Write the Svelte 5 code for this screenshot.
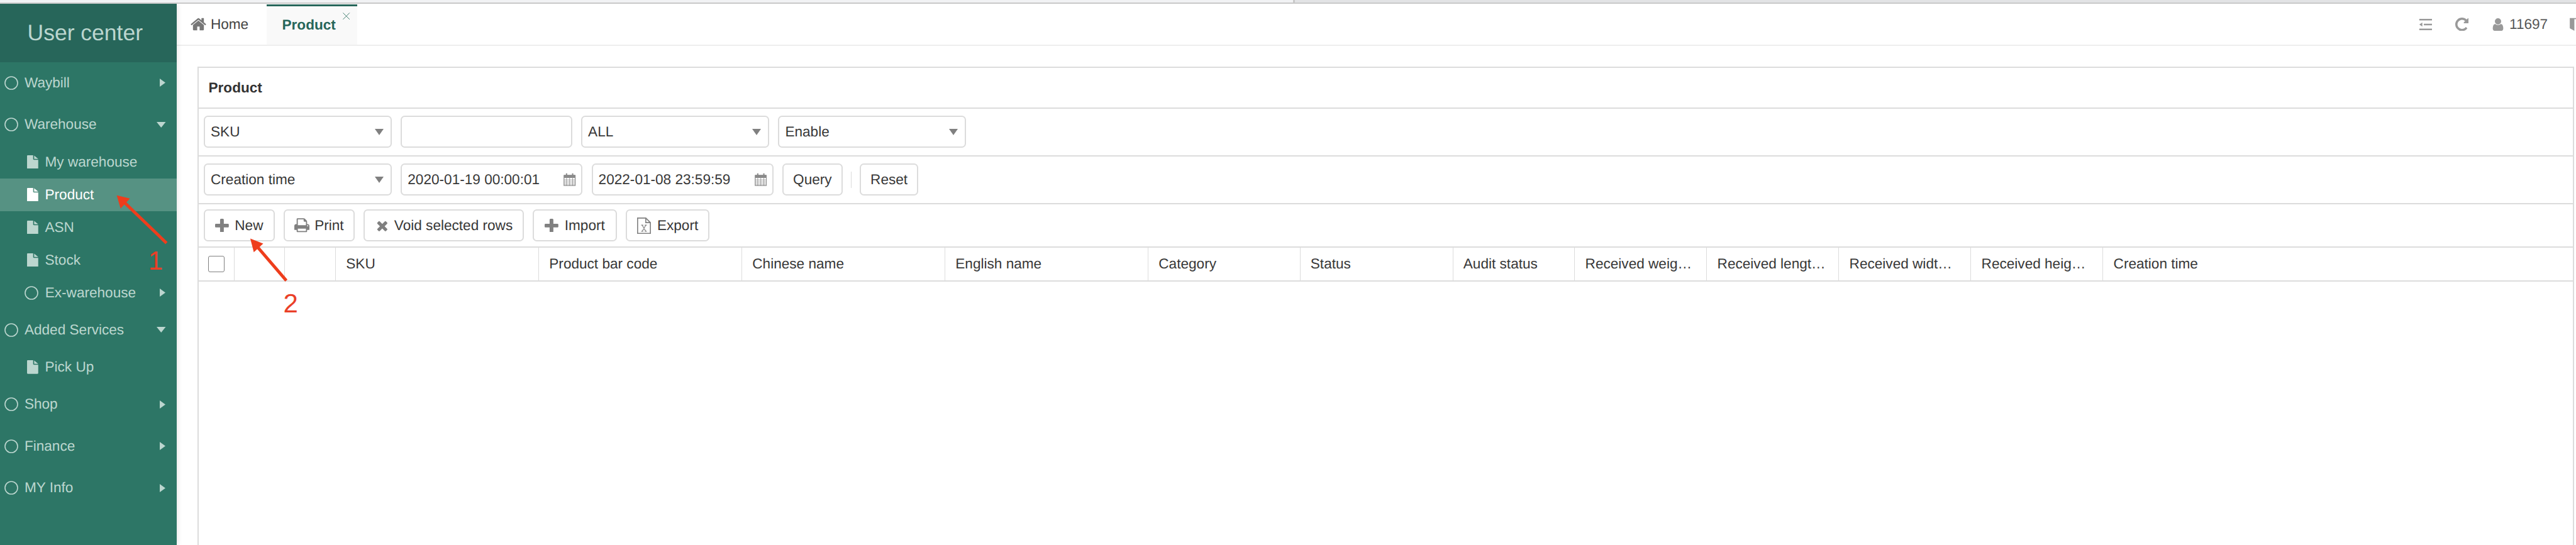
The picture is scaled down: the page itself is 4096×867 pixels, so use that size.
<script>
	const nav = [
		{ label: 'Waybill', arrow: 'right' },
		{ label: 'Warehouse', arrow: 'down' },
		{ label: 'My warehouse', sub: true },
		{ label: 'Product', sub: true, active: true },
		{ label: 'ASN', sub: true },
		{ label: 'Stock', sub: true },
		{ label: 'Ex-warehouse', sub: true, folder: true, arrow: 'right' },
		{ label: 'Added Services', arrow: 'down' },
		{ label: 'Pick Up', sub: true },
		{ label: 'Shop', arrow: 'right' },
		{ label: 'Finance', arrow: 'right' },
		{ label: 'MY Info', arrow: 'right' }
	];

	const columns = [
		'', '', '', 'SKU', 'Product bar code', 'Chinese name', 'English name', 'Category', 'Status', 'Audit status',
		'Received weig…', 'Received lengt…', 'Received widt…', 'Received heig…', 'Creation time'
	];
</script>

<div class="strip"><div class="strip-left"></div><div class="strip-right"></div></div>

<div class="app">
	<aside class="side">
		<div class="logo">User center</div>
		<nav>
			{#each nav as item}
				<div class="item" class:sub={item.sub} class:folder={item.folder} class:active={item.active}>
					{#if item.sub && !item.folder}
						<svg class="file" viewBox="0 0 22 27">
							<path d="M1.500 0H12v7.500C12 8.300 12.700 9 13.500 9H22v16.500c0 .8-.7 1.500-1.500 1.500H1.500C.7 27 0 26.300 0 25.500V1.500C0 .7.7 0 1.500 0zM14 .5l8 6.500h-8z" fill="currentColor" />
						</svg>
					{:else}
						<svg class="circle" viewBox="0 0 27 27">
							<circle cx="13.500" cy="13.500" r="12.300" fill="none" stroke="currentColor" stroke-width="2" />
						</svg>
					{/if}
					<span>{item.label}</span>
					{#if item.arrow === 'right'}
						<svg class="arrow-right" viewBox="0 0 11 16"><path d="M0 0l11 8-11 8z" fill="currentColor" /></svg>
					{:else if item.arrow === 'down'}
						<svg class="arrow-down" viewBox="0 0 18 11"><path d="M0 0h18l-9 11z" fill="currentColor" /></svg>
					{/if}
				</div>
			{/each}
		</nav>
	</aside>

	<main class="main">
		<header class="tabs">
			<div class="tab home">
				<svg class="home-icon" viewBox="0 0 1792 1792">
					<path d="M1472 992v480q0 26-19 45t-45 19h-384v-384h-256v384h-384q-26 0-45-19t-19-45v-480q0-1 .5-3t.5-3l575-474 575 474q1 2 1 6zm223-69l-62 74q-8 9-21 11h-3q-13 0-21-7l-692-577-692 577q-12 8-24 7-13-2-21-11l-62-74q-8-10-7-23.500t11-21.500l719-599q32-26 76-26t76 26l244 204v-195q0-14 9-23t23-9h192q14 0 23 9t9 23v408l219 182q10 8 11 21.500t-7 23.500z" fill="currentColor" />
				</svg>
				Home
			</div>
			<div class="tab current">
				Product
				<svg class="close" viewBox="0 0 14 14"><path d="M.5.5l13 13M13.500.5l-13 13" stroke="currentColor" fill="none" stroke-width="1.200" /></svg>
			</div>
			<div class="tools">
				<svg class="t-outdent" viewBox="0 0 26 22">
					<path d="M1 0h25v3H1zM10 9.500h16v3H10zM1 19h25v3H1zM1 11l6-4v8z" fill="currentColor" />
				</svg>
				<svg class="t-refresh" viewBox="128 128 1536 1536">
					<path d="M1664 256v448q0 26-19 45t-45 19h-448q-42 0-59-40-17-39 14-69l138-138q-148-137-349-137-104 0-198.500 40.500t-163.500 109.500-109.500 163.500-40.500 198.500 40.500 198.500 109.500 163.500 163.500 109.500 198.500 40.500q119 0 225-52t179-147q7-10 23-12 15 0 25 9l137 138q9 8 9.500 20.500t-7.500 22.500q-109 132-264 204.500t-327 72.500q-156 0-298-61t-245-164-164-245-61-298 61-298 164-245 245-164 298-61q147 0 284.500 55.500t244.500 156.500l130-129q29-31 70-14 39 17 39 59z" fill="currentColor" />
				</svg>
				<svg class="t-user" viewBox="256 128 1280 1536">
					<path d="M1536 1399q0 109-62.500 187t-150.500 78h-854q-88 0-150.500-78t-62.500-187q0-85 8.500-160.500t31.500-152 58.500-131 94-89 134.500-34.500q131 128 313 128t313-128q76 0 134.500 34.500t94 89 58.500 131 31.500 152 8.500 160.500zm-256-887q0 159-112.500 271.500t-271.500 112.500-271.500-112.500-112.500-271.500 112.500-271.500 271.500-112.500 271.500 112.500 112.500 271.500z" fill="currentColor" />
				</svg>
				<span class="uid">11697</span>
				<svg class="t-door" viewBox="0 0 17 26">
					<path d="M0 1h17v2H9v23l-9-5z" fill="currentColor" />
				</svg>
			</div>
		</header>

		<section class="panel">
			<div class="row title">Product</div>

			<div class="row filters">
				<div class="ctl select">SKU<i class="caret"></i></div>
				<div class="ctl input"></div>
				<div class="ctl select">ALL<i class="caret"></i></div>
				<div class="ctl select">Enable<i class="caret"></i></div>
			</div>

			<div class="row filters second">
				<div class="ctl select">Creation time<i class="caret"></i></div>
				<div class="ctl date">
					2020-01-19 00:00:01
					{@render calendar()}
				</div>
				<div class="ctl date">
					2022-01-08 23:59:59
					{@render calendar()}
				</div>
				<div class="ctl btn">Query</div>
				<div class="divider"></div>
				<div class="ctl btn">Reset</div>
			</div>

			<div class="row toolbar">
				<div class="ctl tbtn">
					<svg class="i-plus" viewBox="192 128 1408 1408">
						<path d="M1600 736v192q0 40-28 68t-68 28h-416v416q0 40-28 68t-68 28h-192q-40 0-68-28t-28-68v-416h-416q-40 0-68-28t-28-68v-192q0-40 28-68t68-28h416v-416q0-40 28-68t68-28h192q40 0 68 28t28 68v416h416q40 0 68 28t28 68z" fill="currentColor" />
					</svg>
					New
				</div>
				<div class="ctl tbtn print">
					<svg class="i-print" viewBox="64 128 1664 1536">
						<path d="M448 1536h896v-256h-896v256zm0-640h896v-384h-160q-40 0-68-28t-28-68v-160h-640v640zm1152 64q0-26-19-45t-45-19-45 19-19 45 19 45 45 19 45-19 19-45zm128 0v416q0 13-9.500 22.500t-22.500 9.500h-224v160q0 40-28 68t-68 28h-960q-40 0-68-28t-28-68v-160h-224q-13 0-22.500-9.500t-9.500-22.500v-416q0-79 56.500-135.500t135.500-56.500h64v-544q0-40 28-68t68-28h672q40 0 88 20t76 48l152 152q28 28 48 76t20 88v256h64q79 0 135.500 56.500t56.500 135.500z" fill="currentColor" />
					</svg>
					Print
				</div>
				<div class="ctl tbtn void">
					<svg class="i-times" viewBox="250 230 1240 1324">
						<path d="M1490 1322q0 40-28 68l-136 136q-28 28-68 28t-68-28l-294-294-294 294q-28 28-68 28t-68-28l-136-136q-28-28-28-68t28-68l294-294-294-294q-28-28-28-68t28-68l136-136q28-28 68-28t68 28l294 294 294-294q28-28 68-28t68 28l136 136q28 28 28 68t-28 68l-294 294 294 294q28 28 28 68z" fill="currentColor" />
					</svg>
					Void selected rows
				</div>
				<div class="ctl tbtn import">
					<svg class="i-plus" viewBox="192 128 1408 1408">
						<path d="M1600 736v192q0 40-28 68t-68 28h-416v416q0 40-28 68t-68 28h-192q-40 0-68-28t-28-68v-416h-416q-40 0-68-28t-28-68v-192q0-40 28-68t68-28h416v-416q0-40 28-68t68-28h192q40 0 68 28t28 68v416h416q40 0 68 28t28 68z" fill="currentColor" />
					</svg>
					Import
				</div>
				<div class="ctl tbtn">
					<svg class="i-excel" viewBox="0 0 27 32">
						<path d="M1 1h16l9 9v21H1z" fill="none" stroke="currentColor" stroke-width="2" />
						<path d="M17 1v9h9" fill="none" stroke="currentColor" stroke-width="2" />
						<path d="M8 15h4M15 15h4M8 27h4M15 27h4M10 15l7 12M17 15l-7 12" fill="none" stroke="currentColor" stroke-width="1.500" />
					</svg>
					Export
				</div>
			</div>

			<div class="row thead">
				{#each columns as col, i}
					<div class="th">
						{#if i === 0}<span class="check"></span>{:else}{col}{/if}
					</div>
				{/each}
			</div>
		</section>
	</main>

	<svg class="marks" viewBox="0 0 5072 1074">
		<line x1="327" y1="479" x2="243" y2="398" stroke="#ee3d1c" stroke-width="6" />
		<path d="M229 385l26 6-18.500 20z" fill="#ee3d1c" />
		<line x1="563" y1="553" x2="503" y2="483" stroke="#ee3d1c" stroke-width="6" />
		<path d="M492 470l25.500 10-18.500 17z" fill="#ee3d1c" />
		<text x="291" y="532" class="mark-num">1</text>
		<text x="557" y="616" class="mark-num">2</text>
	</svg>
</div>

{#snippet calendar()}
	<svg class="cal" viewBox="0 0 24 26">
		<path d="M1 5h22v20H1z" fill="none" stroke="currentColor" stroke-width="1.500" />
		<path d="M1 4h22v6H1z" fill="currentColor" />
		<path d="M1 14h22M1 18h22M1 22h22M6 10v15M12 10v15M18 10v15" stroke="currentColor" stroke-width="1" />
		<path d="M6 1v6M18 1v6" stroke="currentColor" stroke-width="2.500" />
	</svg>
{/snippet}

<style>
	:global(body) {
		font-family: 'Liberation Sans', Arial, sans-serif;
		font-size: 22.6px;
		color: #383838;
		background: #fff;
		text-rendering: geometricPrecision;
	}

	.strip {
		display: flex;
		height: 5.6px;
		box-sizing: border-box;
		border-bottom: 2px solid #c9c9c9;
	}
	.strip-left {
		width: 2056px;
		background: #f1f2f4;
		border-right: 3px solid #c9c9c9;
	}
	.strip-right {
		flex: 1;
		background: #e2e3e5;
	}

	.app {
		display: flex;
		position: relative;
		height: 861.4px;
		overflow: hidden;
	}

	.side {
		flex: 0 0 281px;
		background: #2d7666;
		color: #bcd6cf;
		box-shadow: 0 0 9px rgba(0, 0, 0, 0.14);
		position: relative;
		z-index: 1;
	}
	.logo {
		height: 93px;
		line-height: 93px;
		background: #27665a;
		padding-left: 43.5px;
		font-size: 35.5px;
		color: #bcd6cf;
	}

	.item {
		display: flex;
		align-items: center;
		height: 66.5px;
		padding-left: 6.5px;
		gap: 10.4px;
	}
	.item.sub {
		height: 52px;
		padding-left: 42.8px;
		gap: 10.9px;
	}
	.item.folder {
		padding-left: 38.8px;
	}
	.item.active {
		background: #569283;
		color: #fff;
	}
	.circle {
		width: 22px;
		height: 22px;
	}
	.file {
		width: 17.800px;
		height: 21.800px;
	}
	.arrow-right {
		width: 9px;
		height: 13px;
		margin-left: auto;
		margin-right: 18.200px;
	}
	.arrow-down {
		width: 14.500px;
		height: 9px;
		margin-left: auto;
		margin-right: 17.400px;
	}

	.main {
		flex: 1;
		display: flex;
		flex-direction: column;
		min-width: 0;
	}

	.tabs {
		display: flex;
		align-items: stretch;
		height: 67px;
		box-sizing: border-box;
		border-bottom: 2px solid #eeeeee;
	}
	.tab {
		display: flex;
		align-items: center;
		box-sizing: border-box;
	}
	.tab.home {
		width: 143px;
		padding-left: 23.400px;
		padding-top: 1.500px;
		gap: 8px;
		color: #444;
	}
	.home-icon {
		width: 27px;
		height: 27px;
		color: #777;
		margin: 0 -2px 0 -2.500px;
	}
	.tab.current {
		position: relative;
		width: 143.800px;
		margin-top: 1px;
		padding-left: 24.500px;
		background: #f9f9f9;
		border-top: 3.200px solid #27665a;
		color: #27665a;
		font-weight: bold;
	}
	.close {
		position: absolute;
		top: 10px;
		right: 11.300px;
		width: 11.300px;
		height: 11.300px;
		color: #3f7d6e;
	}

	.tools {
		margin-left: auto;
		display: flex;
		align-items: center;
		padding-top: 1px;
		color: #999;
	}
	.t-outdent {
		width: 21px;
		height: 18px;
		margin-right: 37px;
	}
	.t-refresh {
		width: 21.500px;
		height: 21.500px;
		margin-right: 38px;
	}
	.t-user {
		width: 18px;
		height: 20px;
		margin-right: 9px;
	}
	.uid {
		color: #555;
		margin-right: 33.500px;
	}
	.t-door {
		width: 16px;
		height: 21px;
		margin-right: -4.700px;
	}

	.panel {
		flex: 1;
		margin: 33px 2.800px 0 33px;
		border: 2px solid #dcdcdc;
		border-bottom: 0;
		min-height: 0;
	}
	.row {
		box-sizing: border-box;
		border-bottom: 2px solid #dcdcdc;
	}
	.title {
		height: 65.200px;
		line-height: 63.500px;
		padding-left: 15.500px;
		font-weight: bold;
		color: #333;
	}
	.filters {
		display: flex;
		align-items: center;
		gap: 14.300px;
		height: 75.900px;
		padding-left: 8px;
	}
	.filters.second {
		height: 76.100px;
	}
	.toolbar {
		display: flex;
		align-items: center;
		gap: 14.200px;
		height: 69.500px;
		padding-left: 8px;
	}

	.ctl {
		display: flex;
		align-items: center;
		box-sizing: border-box;
		height: 51px;
		border: 2px solid #dcdcdc;
		border-radius: 6.500px;
		padding: 0 9px;
		background: #fff;
	}
	.select {
		width: 299px;
		position: relative;
	}
	.caret {
		position: absolute;
		right: 11.500px;
		top: 50%;
		margin-top: -5px;
		border-style: solid;
		border-width: 10px 7.250px 0;
		border-color: #808080 transparent transparent;
	}
	.input {
		width: 272.500px;
	}
	.date {
		width: 289px;
		justify-content: space-between;
		padding-right: 8.500px;
	}
	.cal {
		width: 19.400px;
		height: 21px;
		color: #8a8a8a;
	}
	.btn {
		padding: 0 15.200px;
	}
	.divider {
		width: 1px;
		height: 26px;
		margin: 0 -1.250px;
		background: #dcdcdc;
	}

	.tbtn {
		height: 51.700px;
		padding: 0 16px;
		gap: 9.500px;
	}
	.tbtn svg {
		color: #808080;
	}
	.tbtn.print {
		padding: 0 15.500px;
		gap: 8px;
	}
	.tbtn.void {
		padding: 0 16px 0 19px;
		gap: 10.500px;
	}
	.tbtn.import {
		padding: 0 17.500px 0 17px;
	}
	.i-plus {
		width: 21.800px;
		height: 21.800px;
	}
	.i-print {
		width: 24px;
		height: 22.600px;
	}
	.i-times {
		width: 17px;
		height: 18px;
	}
	.i-excel {
		width: 22px;
		height: 26px;
	}

	.thead {
		display: grid;
		grid-template-columns: 56.500px 80.800px 80.800px 323px 323px 323px 323px 241.500px 243px 193.800px 210px 210px 210px 210px 1fr;
		height: 53.300px;
	}
	.th {
		display: block;
		box-sizing: border-box;
		line-height: 51.500px;
		padding: 0 0 0 16.200px;
		border-right: 1px solid #dcdcdc;
		white-space: nowrap;
	}
	.th:last-child {
		border-right: 0;
	}
	.check {
		display: block;
		box-sizing: border-box;
		width: 26px;
		height: 26px;
		margin: 12.500px 0 0 -1px;
		border: 1.500px solid #808080;
		border-radius: 3px;
	}

	.marks {
		position: absolute;
		left: 0;
		top: -5.600px;
		width: 4096px;
		height: 867px;
		z-index: 2;
		pointer-events: none;
	}
	.mark-num {
		font-size: 52px;
		fill: #ea4028;
	}
</style>
